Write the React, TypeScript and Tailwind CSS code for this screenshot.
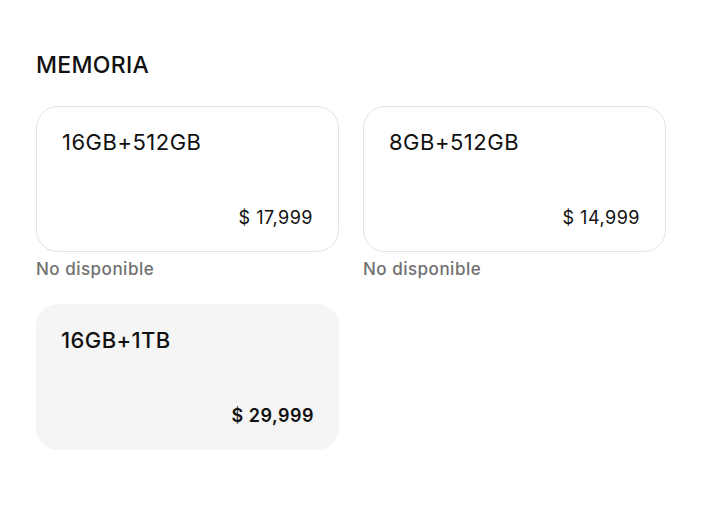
import React from "react";

type Opt = { name: string; price: string; unavailable?: boolean; selected?: boolean };

const options: Opt[] = [
  { name: "16GB+512GB", price: "$ 17,999", unavailable: true },
  { name: "8GB+512GB", price: "$ 14,999", unavailable: true },
  { name: "16GB+1TB", price: "$ 29,999", selected: true },
];

function Card({ o }: { o: Opt }) {
  return (
    <div className="flex flex-col">
      <div
        className={
          o.selected
            ? "flex h-[146px] flex-col justify-between rounded-[22px] bg-[#f5f5f5] pl-[25px] pr-[25px] pt-[22px] pb-[22px]"
            : "flex h-[146px] flex-col justify-between rounded-[22px] border border-[#e3e3e3] bg-white pl-[25px] pr-[25px] pt-[21px] pb-[21px]"
        }
      >
        <div
          className={
            o.selected
              ? "text-[22px] leading-[28px] font-medium tracking-[0.4px] text-[#111]"
              : "text-[22px] leading-[28px] font-normal tracking-[0.5px] text-[#111]"
          }
        >
          {o.name}
        </div>
        <div
          className={
            o.selected
              ? "text-right text-[18px] leading-[24px] font-semibold tracking-[0.5px] text-[#111]"
              : "text-right text-[18px] leading-[24px] font-normal tracking-[0.5px] text-[#111]"
          }
        >
          {o.price}
        </div>
      </div>
      {o.unavailable && (
        <div className="mt-[7px] text-[17px] leading-[20px] font-medium tracking-[0.5px] text-[#707070]">
          No disponible
        </div>
      )}
    </div>
  );
}

export default function App() {
  return (
    <div
      className="min-h-screen bg-white pl-[36px] pt-[51px]"
      style={{ fontFamily: "Inter, 'Noto Sans', sans-serif" }}
    >
      <h2 className="text-[23px] leading-[28px] font-medium tracking-[0.3px] text-[#111]">MEMORIA</h2>
      <div className="mt-[27px] grid w-[630px] grid-cols-[303px_303px] gap-x-[24px] gap-y-[25px]">
        {options.map((o) => (
          <Card key={o.name} o={o} />
        ))}
      </div>
    </div>
  );
}
